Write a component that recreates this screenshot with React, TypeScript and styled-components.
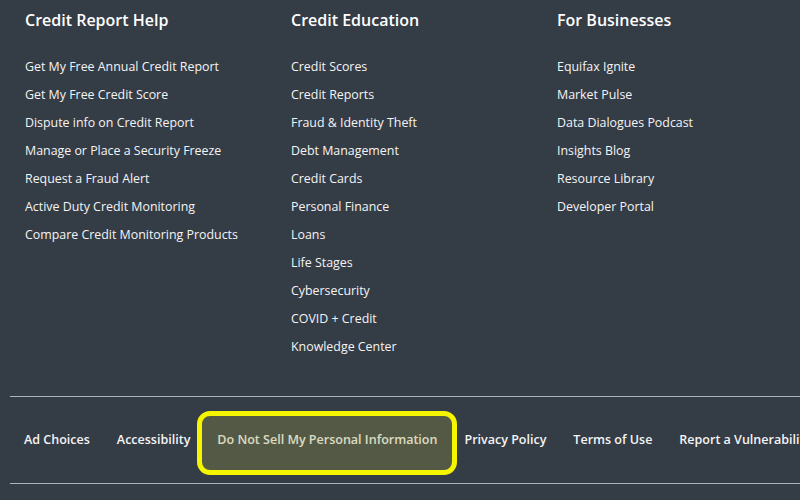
import styled, { createGlobalStyle } from "styled-components";

const GlobalStyle = createGlobalStyle`
  html, body {
    margin: 0;
    padding: 0;
    background: #343c46;
    font-family: "Open Sans", "Liberation Sans", sans-serif;
    overflow: hidden;
  }
`;

const Footer = styled.footer`
  width: 800px;
  height: 500px;
  background: #343c46;
  color: #ffffff;
  overflow: hidden;
`;

const Columns = styled.div`
  display: grid;
  grid-template-columns: 266px 266px 266px;
  padding: 8px 0 0 25px;
`;

const Column = styled.div`
  display: flex;
  flex-direction: column;
`;

const Heading = styled.h3`
  margin: 0 0 21px;
  font-size: 16px;
  line-height: 24px;
  font-weight: 600;
  color: #ffffff;
`;

const LinkList = styled.ul`
  list-style: none;
  margin: 0;
  padding: 0;
`;

const Item = styled.li`
  font-size: 12.4px;
  line-height: 27.95px;
  color: #f4f4f4;
  white-space: nowrap;
`;

const Divider = styled.hr`
  margin: 0 0 0 10px;
  border: none;
  border-top: 1px solid #aeb2b8;
`;

const Legal = styled.nav`
  margin-top: 36px;
`;

const LegalRow = styled.div`
  display: flex;
  align-items: center;
  gap: 27px;
  padding: 33px 0 33px 24px;
  white-space: nowrap;
`;

const LegalLink = styled.span<{ $flagged?: boolean }>`
  position: relative;
  font-size: 12.52px;
  line-height: 20px;
  font-weight: 600;
  color: #f4f4f4;

  ${(p) =>
    p.$flagged &&
    `
    &::after {
      content: "";
      position: absolute;
      left: -20px;
      right: -20px;
      top: -19px;
      bottom: -25px;
      border: 5px solid #f5f500;
      border-radius: 13px;
      background: rgba(160, 160, 70, 0.3);
    }
  `}
`;

const sections = [
  {
    title: "Credit Report Help",
    links: [
      "Get My Free Annual Credit Report",
      "Get My Free Credit Score",
      "Dispute info on Credit Report",
      "Manage or Place a Security Freeze",
      "Request a Fraud Alert",
      "Active Duty Credit Monitoring",
      "Compare Credit Monitoring Products",
    ],
  },
  {
    title: "Credit Education",
    links: [
      "Credit Scores",
      "Credit Reports",
      "Fraud & Identity Theft",
      "Debt Management",
      "Credit Cards",
      "Personal Finance",
      "Loans",
      "Life Stages",
      "Cybersecurity",
      "COVID + Credit",
      "Knowledge Center",
    ],
  },
  {
    title: "For Businesses",
    links: [
      "Equifax Ignite",
      "Market Pulse",
      "Data Dialogues Podcast",
      "Insights Blog",
      "Resource Library",
      "Developer Portal",
    ],
  },
];

const legal = [
  "Ad Choices",
  "Accessibility",
  "Do Not Sell My Personal Information",
  "Privacy Policy",
  "Terms of Use",
  "Report a Vulnerability",
];

function App() {
  return (
    <Footer>
      <GlobalStyle />
      <Columns>
        {sections.map((s) => (
          <Column key={s.title}>
            <Heading>{s.title}</Heading>
            <LinkList>
              {s.links.map((l) => (
                <Item key={l}>{l}</Item>
              ))}
            </LinkList>
          </Column>
        ))}
      </Columns>
      <Legal>
        <Divider />
        <LegalRow>
          {legal.map((l) => (
            <LegalLink key={l} $flagged={l.startsWith("Do Not Sell")}>
              {l}
            </LegalLink>
          ))}
        </LegalRow>
        <Divider />
      </Legal>
    </Footer>
  );
}

export default App;
